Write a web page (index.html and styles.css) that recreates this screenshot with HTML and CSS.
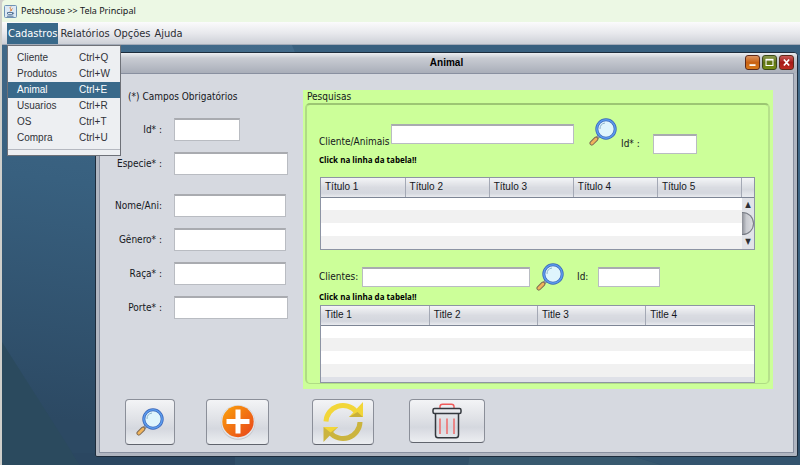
FILE: index.html
```html
<!DOCTYPE html>
<html lang="pt-BR">
<head>
<meta charset="utf-8">
<title>Petshouse &gt;&gt; Tela Principal</title>
<link rel="stylesheet" href="styles.css">
</head>
<body>
<svg class="defs" aria-hidden="true">
  <defs>
    <linearGradient id="orange" x1="0" y1="0" x2="1" y2="1"><stop offset="0" stop-color="#fba30a"/><stop offset="1" stop-color="#e8421c"/></linearGradient>
    <symbol id="magnifier" viewBox="0 0 28 28">
      <path d="M10.5 17.5 6.5 21.500" stroke="#68707a" stroke-width="3"/>
      <path d="M10 18 7 21" stroke="#c3c8cc" stroke-width="1.200"/>
      <path d="M7 21 2.800 25.200" stroke="#7b6650" stroke-width="4.600" stroke-linecap="round"/>
      <path d="M7 21 2.800 25.200" stroke="#f0b45c" stroke-width="2.800" stroke-linecap="round"/>
      <circle cx="17" cy="11" r="9.200" fill="#dff5fd" stroke="#3d67b8" stroke-width="3"/>
      <circle cx="17" cy="11" r="9.200" fill="none" stroke="#5a9bee" stroke-width="1.600"/>
      <path d="M11 11a6 6 0 0 1 5-6" fill="none" stroke="#8fb4cc" stroke-width="1"/>
    </symbol>
  </defs>
</svg>
<div class="app">
  <header class="titlebar">
    <svg class="java" viewBox="0 0 13 13" aria-hidden="true">
      <rect x=".5" y=".5" width="12" height="12" rx="1" fill="#dce9f5" stroke="#6f93b5"/>
      <path d="M7 1.500C4.500 3.500 8.500 4 6 6.500M8.500 3.500C7 4.500 8 5 7.200 6" fill="none" stroke="#e07a2c" stroke-width="1"/>
      <path d="M3.500 7.500h5v1.500c0 1-5 1-5 0zM8.500 7.800c1.800-.4 1.500 1.500-.3 1.300M3 11.200h6.500" fill="none" stroke="#46698e" stroke-width=".9"/>
    </svg>
    <span>Petshouse &gt;&gt; Tela Principal</span>
  </header>
  <nav class="menubar">
    <button class="open" type="button">Cadastros</button>
    <button type="button">Relatórios</button>
    <button type="button">Opções</button>
    <button type="button">Ajuda</button>
  </nav>
  <main class="desktop">
    <svg class="wallpaper" viewBox="0 0 798 420" preserveAspectRatio="none" aria-hidden="true">
      <path d="M0 297 78 420H0z" fill="#2b4a5e"/>
      <path d="M78 420 70 408H233V420z" fill="#2b4761"/>
      <path d="M233 408H468L466 420H233z" fill="#305069"/>
      <path d="M468 408H620L660 420H466z" fill="#38596f"/>
      <path d="M620 408H798V420H660z" fill="#33546e"/>
      <path d="M290 0H798V10H294z" fill="#38607f"/>
    </svg>
    <section class="frame">
      <header class="frame-title">
        <h1>Animal</h1>
        <div class="controls">
          <button class="min" type="button" aria-label="Minimizar"><svg viewBox="0 0 15 15"><path d="M4 10.500h7" stroke="#fff" stroke-width="2"/></svg></button>
          <button class="max" type="button" aria-label="Maximizar"><svg viewBox="0 0 15 15"><path d="M3.500 4.500h8v6.500h-8z" fill="none" stroke="#fff" stroke-width="1.200"/><path d="M3 4h9" stroke="#fff" stroke-width="1.500"/></svg></button>
          <button class="close" type="button" aria-label="Fechar"><svg viewBox="0 0 15 15"><path d="M4.500 4 10.500 11M10.500 4 4.500 11" stroke="#fff" stroke-width="2"/></svg></button>
        </div>
      </header>
      <div class="content">
        <form class="fields">
          <p>(*) Campos Obrigatórios</p>
          <div class="field"><label for="id">Id* :</label><input id="id" class="short"></div>
          <div class="field"><label for="especie">Especie* :</label><input id="especie"></div>
          <div class="field group"><label for="nome">Nome/Ani:</label><input id="nome" class="medium"></div>
          <div class="field"><label for="genero">Gênero* :</label><input id="genero" class="medium"></div>
          <div class="field"><label for="raca">Raça* :</label><input id="raca" class="medium"></div>
          <div class="field"><label for="porte">Porte* :</label><input id="porte"></div>
        </form>
        <section class="search">
          <h2>Pesquisas</h2>
          <div class="box">
            <div class="query pets">
              <label for="animais">Cliente/Animais</label><input id="animais">
              <svg class="lens" aria-hidden="true"><use href="#magnifier"/></svg>
              <div class="code"><label for="idc">Id* :</label><input id="idc"></div>
            </div>
            <p class="note">Click na linha da tabela!!</p>
            <div class="grid scrolls">
              <table>
                <thead><tr><th>Título 1</th><th>Título 2</th><th>Título 3</th><th>Título 4</th><th>Título 5</th></tr></thead>
                <tbody>
                  <tr><td></td><td></td><td></td><td></td><td></td></tr>
                  <tr><td></td><td></td><td></td><td></td><td></td></tr>
                  <tr><td></td><td></td><td></td><td></td><td></td></tr>
                  <tr><td></td><td></td><td></td><td></td><td></td></tr>
                </tbody>
              </table>
              <div class="scroll">
                <div class="corner"></div>
                <div class="track"><span>▲</span><i></i><span>▼</span></div>
              </div>
            </div>
            <div class="query clients">
              <label for="clientes">Clientes:</label><input id="clientes">
              <svg class="lens" aria-hidden="true"><use href="#magnifier"/></svg>
              <div class="code"><label for="idk">Id:</label><input id="idk"></div>
            </div>
            <p class="note">Click na linha da tabela!!</p>
            <div class="grid last">
              <table>
                <thead><tr><th>Title 1</th><th>Title 2</th><th>Title 3</th><th>Title 4</th></tr></thead>
                <tbody>
                  <tr><td></td><td></td><td></td><td></td></tr>
                  <tr><td></td><td></td><td></td><td></td></tr>
                  <tr><td></td><td></td><td></td><td></td></tr>
                  <tr><td></td><td></td><td></td><td></td></tr>
                </tbody>
              </table>
            </div>
          </div>
        </section>
        <div class="actions">
          <button class="find" type="button" aria-label="Pesquisar"><svg width="28" height="28"><use href="#magnifier"/></svg></button>
          <button class="add" type="button" aria-label="Adicionar"><svg width="36" height="36" viewBox="0 0 36 36"><circle cx="18" cy="18.500" r="17.300" fill="#c3c5cb"/><circle cx="18" cy="18" r="16.800" fill="#e4e5e9"/><circle cx="18" cy="17.500" r="15.700" fill="url(#orange)"/><path d="M18 5.500v24M6.500 17.500h23" stroke="#fff" stroke-width="5"/></svg></button>
          <button class="update" type="button" aria-label="Atualizar"><svg width="40" height="42" viewBox="0 0 40 42">
            <path d="M3 20.500A17 17 0 0 1 33 10.500" fill="none" stroke="#f2d639" stroke-width="5"/>
            <path d="M40 1v15H26z" fill="#f2d639"/><path d="M40 16H26l8.500-5z" fill="#c9b03a"/>
            <path d="M37 21A17 17 0 0 1 7 31.500" fill="none" stroke="#cbb43e" stroke-width="5"/>
            <path d="M.5 41V26H15z" fill="#cbb43e"/><path d="M.5 26H15l-7.500 5.500z" fill="#f2d639"/>
          </svg></button>
          <button class="remove" type="button" aria-label="Excluir"><svg width="30" height="36" viewBox="0 0 30 36" fill="none">
            <path d="M8 5V3.500Q8 1.200 10.500 1.200h9Q22 1.200 22 3.500V5" stroke="#ef5a5a" stroke-width="1.400"/>
            <rect x="1" y="5.500" width="28" height="5" rx="1.500" stroke="#33373d" stroke-width="1.500"/>
            <path d="M3.500 10.500V32q0 2.800 2.500 2.800h18q2.500 0 2.500-2.800V10.500" stroke="#33373d" stroke-width="1.500"/>
            <path d="M8 15.500V31M15 15.500V31M22 15.500V31" stroke="#ef6a6a" stroke-width="1.500"/>
          </svg></button>
        </div>
      </div>
    </section>
    <div class="menu" role="menu">
      <button type="button"><span>Cliente</span><kbd>Ctrl+Q</kbd></button>
      <button type="button"><span>Produtos</span><kbd>Ctrl+W</kbd></button>
      <button class="active" type="button"><span>Animal</span><kbd>Ctrl+E</kbd></button>
      <button type="button"><span>Usuarios</span><kbd>Ctrl+R</kbd></button>
      <button type="button"><span>OS</span><kbd>Ctrl+T</kbd></button>
      <button type="button"><span>Compra</span><kbd>Ctrl+U</kbd></button>
      <hr>
    </div>
  </main>
</div>
</body>
</html>
```
FILE: styles.css
```css
* { box-sizing: border-box; }
body {
  margin: 0;
  background: #cfcfcb;
  color: #15171c;
  font: 10px/14px "DejaVu Sans Condensed", "DejaVu Sans", sans-serif;
}
h1, h2, p { margin: 0; font-size: 10px; }
button { font: inherit; color: inherit; border: 0; padding: 0; background: none; }
.defs { position: absolute; width: 0; height: 0; }
.app { display: flex; flex-direction: column; min-height: 100vh; margin-left: 2px; }

.titlebar {
  display: flex; align-items: center; gap: 4px;
  height: 22px; padding-left: 2px;
  border-top-left-radius: 4px;
  background: #ecf8e4;
  font: 9px/14px "Noto Sans", sans-serif;
}
.java { width: 13px; height: 13px; }

.menubar {
  display: flex; height: 23px; padding: 1px 5px 0;
  background: linear-gradient(#fbfbfc, #e8e9ed 50%, #cdd0d7);
  border-bottom: 1px solid #a3abb8;
  font-size: 11px;
  color: #2c2e33;
}
.menubar button { padding: 0 2px; white-space: nowrap; }
.menubar .open { background: #39698a; color: #fff; padding: 0 1px; }

.desktop {
  position: relative; flex: 1;
  background: linear-gradient(188deg, #466f8f, #38607f 45%, #2c4963 90%);
}
.wallpaper { position: absolute; inset: 0; width: 100%; height: 100%; }

.frame {
  position: absolute; inset: 7px 2px 8px 93px;
  display: flex; flex-direction: column;
  border: 1px solid #1d2c3c; border-radius: 4px 4px 2px 2px;
  padding: 0 3px 3px;
  background: #b0b5c0;
}
.frame-title {
  position: relative;
  display: flex; align-items: center; justify-content: center;
  height: 20px; margin: 0 -3px;
  border-radius: 3px 3px 0 0;
  background: linear-gradient(#eceef1, #c9ccd3 25%, #a9aeb9);
}
.frame-title h1 { font: bold 10px/14px "Liberation Sans", sans-serif; color: #000; }
.controls { position: absolute; right: 3px; top: 2px; display: flex; gap: 2px; }
.controls button { width: 15px; height: 15px; border-radius: 3px; border: 1px solid #5c2a1b; }
.controls svg { display: block; width: 13px; height: 13px; }
.controls .min { background: linear-gradient(#dd9461, #c96214 50%, #d97a1c); }
.controls .max { background: linear-gradient(#8c9a50, #5e7312 50%, #789018); border-color: #3c481c; }
.controls .close { background: linear-gradient(#c95a56, #a51a17 50%, #bd2c22); }

.content {
  flex: 1;
  display: grid; grid-template-columns: 203px 1fr; grid-template-rows: 299px 1fr;
  row-gap: 10px;
  padding: 16px 20px 0 0;
  border: 1px solid #8990a0;
  background: #d6d9e0;
}
.fields { display: flex; flex-direction: column; gap: 11px; }
.fields p { padding-left: 28px; line-height: 14px; margin-bottom: 3px; }
.field { display: grid; grid-template-columns: 62px 114px; column-gap: 12px; align-items: center; }
.field label { text-align: right; white-space: nowrap; }
.group { margin-top: 8px; }
input {
  min-width: 0; width: 100%; height: 23px; padding: 0 4px;
  border: 1px solid #b9bcc2; border-top: 2px solid #a9abb0; border-radius: 0;
  background: #fff; font: inherit;
}
.field .short { width: 66px; }
.field .medium { width: 112px; }

.search { background: #ccff99; padding: 0 3px 5px 2px; }
.search h2 { font-weight: normal; line-height: 13px; padding-left: 2px; }
.box {
  height: 281px; padding: 13px 13px 0 12px;
  border: 2px solid #b0dc85; border-top-color: #9cc673; border-right-color: #b6e18b; border-bottom-width: 1px;
  border-radius: 5px;
}
.box input { height: 20px; }
.query { display: grid; }
.query label { white-space: nowrap; }
.pets { grid-template-columns: 72px 183px 28px 78px; grid-template-rows: 36px; }
.pets > label { padding-top: 17px; }
.pets > input { margin-top: 6px; }
.lens { width: 28px; height: 28px; }
.pets .lens { margin-left: 15px; }
.code { display: grid; align-items: center; }
.pets .code { grid-template-columns: 32px 44px; align-self: end; margin-left: 19px; }
.clients { grid-template-columns: 43px 168px 28px 83px; align-items: center; margin-top: 13px; }
.clients .lens { margin-left: 6px; }
.clients .code { grid-template-columns: 21px 62px; margin-left: 19px; }
.note { font: bold 8px/12px "Open Sans", sans-serif; color: #000; }

.grid { display: flex; margin-left: 1px; border: 1px solid #8d94a4; background: #fff; }
.scrolls { margin-top: 11px; }
.last { margin-top: 2px; height: 78px; background: #dfe1e8; align-items: flex-start; }
table { flex: 1; border-collapse: collapse; table-layout: fixed; width: 100%; font: 10px/14px "Liberation Sans", sans-serif; }
th {
  height: 19px; padding: 0 4px; text-align: left; font-weight: normal;
  background: linear-gradient(#f4f5f7, #d9dbe1 50%, #d4d7de 80%, #e9ebef);
  border-right: 1px solid #a4a9b5; border-bottom: 1px solid #7d8595;
}
.last th:last-child { border-right: 0; }
td { height: 13px; padding: 0; background: #fff; }
tr:nth-child(even) td { background: #f1f1f1; }
.scroll { width: 12px; display: flex; flex-direction: column; }
.corner { height: 20px; background: linear-gradient(#f4f5f7, #d6d9df 60%, #e9ebef); border-bottom: 1px solid #7d8595; }
.track {
  flex: 1; display: flex; flex-direction: column; align-items: center;
  background: #e1e3e8; font-size: 8px; color: #2d3035; overflow: hidden;
}
.track span { line-height: 14px; }
.track i {
  width: 12px; flex: 1; border-radius: 0 12px 12px 0;
  background: linear-gradient(90deg, #8b8e96, #c8cad0 40%, #dcdde1);
  border: 1px solid #777b84; border-left: 0;
}

.actions { grid-column: 1 / -1; display: flex; align-items: flex-start; padding-left: 25px; }
.actions button {
  display: flex; align-items: center; justify-content: center;
  height: 46px; border: 1px solid #8b8f99; border-bottom-color: #60646d; border-radius: 4px;
  background: linear-gradient(#f3f4f6, #dfe1e6 45%, #d5d8df 65%, #eceef1);
}
.actions .find { width: 50px; }
.actions .add { width: 63px; margin-left: 31px; }
.actions .update { width: 62px; margin-left: 43px; }
.actions .remove { width: 76px; height: 44px; margin-left: 35px; }

.menu {
  position: absolute; left: 5px; top: 0;
  width: 114px; padding: 4px 0 5px;
  border: 1px solid #6e7178;
  background: #edeff2;
  font: 10px/16px "Liberation Sans", sans-serif;
  color: #303238;
}
.menu button { display: grid; grid-template-columns: 62px 1fr; width: 100%; height: 16px; padding-left: 9px; text-align: left; }
.menu kbd { font: inherit; }
.menu .active { background: #39698a; color: #fff; }
.menu hr { margin: 3px 0 0; border: 0; border-top: 1px solid #b5b8c0; }
```
